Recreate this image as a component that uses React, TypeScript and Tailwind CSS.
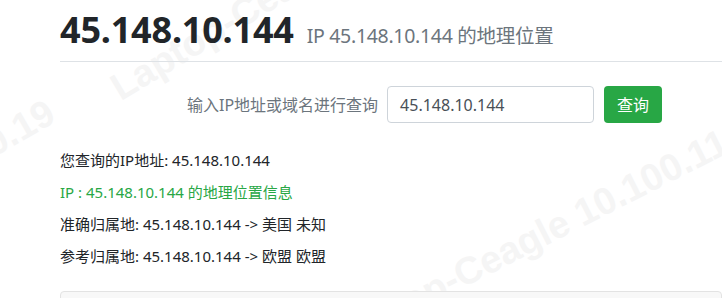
import React from "react";

const font = {
  fontFamily: '"Noto Sans", "Noto Sans CJK SC", sans-serif',
};

function Watermark({ className }: { className: string }) {
  return (
    <div
      className={
        "pointer-events-none absolute whitespace-nowrap text-[38px] leading-[44px] font-bold text-[#f5f5f5] origin-left " +
        className
      }
      style={{ fontFamily: '"Liberation Sans", sans-serif' }}
    >
      Laptop-Ceagle 10.100.110.19
    </div>
  );
}

export default function App() {
  return (
    <div
      className="relative w-[722px] h-[298px] overflow-hidden bg-white text-[#212529]"
      style={font}
    >
      <Watermark className="left-[114px] top-[68px] -rotate-[31deg]" />
      <Watermark className="-left-[395px] top-[345px] -rotate-[30deg]" />
      <Watermark className="left-[332px] top-[318px] -rotate-[27deg]" />

      <div className="relative pl-[60px]">
        <div className="flex items-baseline gap-[13px] pt-[6px] h-[55px]">
          <h1 className="text-[36px] font-bold leading-[48px] tracking-[-0.2px] text-[#212529]">
            45.148.10.144
          </h1>
          <span className="text-[19.5px] leading-[28px] tracking-[-0.3px] text-[#6c757d]">
            IP 45.148.10.144 的地理位置
          </span>
        </div>
        <div className="mt-[6px] border-t border-[#dee2e6]" />

        <div className="mt-[24px] ml-[127px] flex items-center gap-[9px]">
          <span className="text-[16px] text-[#6c757d]">输入IP地址或域名进行查询</span>
          <div className="flex h-[37px] w-[207px] items-center rounded-[4px] border border-[#ced4da] px-[12px] text-[16px] text-[#495057]">
            45.148.10.144
          </div>
          <button className="ml-[1px] h-[37px] w-[58px] rounded-[4px] bg-[#28a745] text-[16px] text-white">
            查询
          </button>
        </div>

        <div className="mt-[21px] flex flex-col text-[15px] leading-[32px]">
          <p>您查询的IP地址: 45.148.10.144</p>
          <p className="text-[#28a745]">IP : 45.148.10.144 的地理位置信息</p>
          <p>准确归属地: 45.148.10.144 -&gt; 美国 未知</p>
          <p>参考归属地: 45.148.10.144 -&gt; 欧盟 欧盟</p>
        </div>

        <div className="mt-[19px] h-[40px] rounded-[4px] border border-[#e3e3e3] bg-[#f8f8f8]" />
      </div>
    </div>
  );
}
